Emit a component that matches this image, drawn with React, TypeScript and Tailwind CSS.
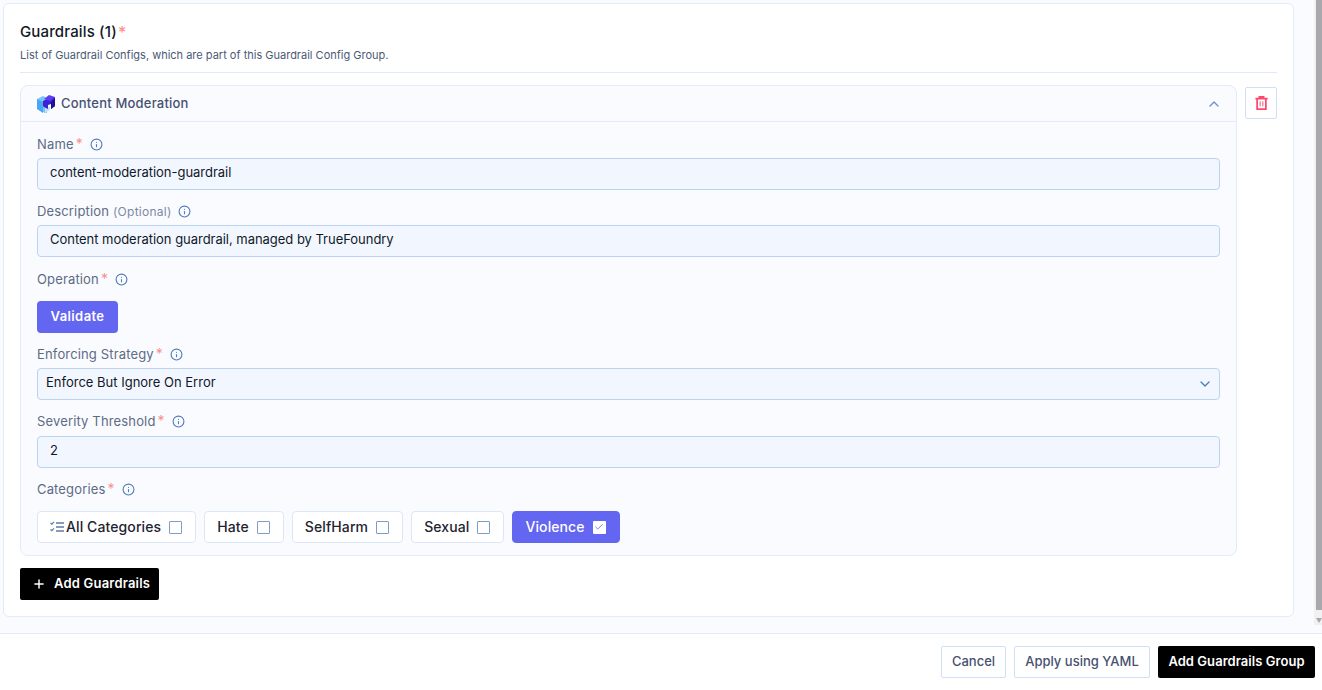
import React from "react";
import { Check, ChevronDown, ChevronUp, Info, Plus } from "lucide-react";

function Label({ text, optional, mb = "mb-1" }: { text: string; optional?: boolean; mb?: string }) {
  return (
    <div className={`h-5 flex items-center text-[13px] text-[#5d6b85] tracking-[0.15px] ${mb}`}>
      <span className="pt-[2px]">{text}</span>
      {optional ? (
        <span className="ml-1 pt-[2px] text-xs tracking-[0.25px] text-[#7b8aa5]">(Optional)</span>
      ) : (
        <span className="ml-[2px] text-[#fb8f8f] text-sm leading-none">*</span>
      )}
      <Info size={13} className={`text-[#4f7ab8] ${optional ? "ml-[6px]" : "ml-[7px]"}`} />
    </div>
  );
}

function TextBox({ value }: { value: string }) {
  return (
    <div className="h-8 flex items-center px-3 pb-[2px] border border-[#bcd3f0] rounded bg-[#f2f7ff] text-[13px] tracking-[-0.03px] text-[#111827]">
      {value}
    </div>
  );
}

function ChecksIcon() {
  return (
    <svg width="14" height="12" viewBox="0 0 14 12" fill="none" className="mr-[2px]">
      <path d="M6 2h8M6 6h8M6 10h8" stroke="#5f7ba8" strokeWidth="1.500" />
      <path d="M.5 2 1.800 3.200 4 .8M.5 8.500 1.800 9.700 4 7.300" stroke="#5f7ba8" strokeWidth="1.200" />
    </svg>
  );
}

function Chip({ label, checked, icon }: { label: string; checked?: boolean; icon?: boolean }) {
  return (
    <div
      className={`h-8 flex items-center pl-3 pr-[13px] rounded border font-medium text-sm tracking-[0.1px] ${
        checked
          ? "bg-[#6366f1] border-[#6366f1] text-white"
          : "bg-white border-[#dbe7f8] text-[#1f2430]"
      }`}
    >
      {icon && <ChecksIcon />}
      <span>{label}</span>
      {checked ? (
        <span className="ml-2 w-[13px] h-[13px] flex items-center justify-center bg-white rounded-[1px]">
          <Check size={10} strokeWidth={2} className="text-[#6366f1]" />
        </span>
      ) : (
        <span className="ml-2 w-[13px] h-[13px] border border-[#7f9cc7] rounded-[1px] bg-white" />
      )}
    </div>
  );
}

export default function App() {
  return (
    <div className="h-[690px] bg-[#f9fbff] overflow-hidden flex flex-col font-['Inter',sans-serif]">
      <div className="flex h-[634px] border-b border-[#e3eaf6]">
        <div className="flex-1 pl-[3px] pt-[3px]">
          {/* Guardrails card */}
          <section className="w-[1291px] h-[614px] bg-white border border-[#e2ebfa] rounded-md px-4 pt-[18px]">
            <h2 className="h-5 flex items-center text-[15px] tracking-[0.15px] font-medium text-[#111827]">
              Guardrails (1)
              <span className="ml-px text-[#fb8f8f] text-base leading-none">*</span>
            </h2>
            <p className="mt-1 text-[11px] leading-[18px] text-[#4b5a75]">
              List of Guardrail Configs, which are part of this Guardrail Config Group.
            </p>
            <div className="mt-2 border-t border-[#dfe9f8]" />

            <div className="mt-3 flex gap-2">
              <div className="w-[1217px] h-[471px] border border-[#e2ebfa] rounded-lg bg-[#fafbff]">
                <div className="h-9 flex items-center justify-between pl-4 pr-[14px] border-b border-[#e2ebfa]">
                  <div className="flex items-center gap-[6px] text-[13px] tracking-[0.2px] font-medium text-[#475170]">
                    <svg width="18" height="18" viewBox="0 0 18 18">
                      <path d="M0 4 6 1l4 2v15l-2 0-8-4z" fill="#7cc4f8" />
                      <path d="M0 4l6 3v11l-6-4z" fill="#4aa6f2" />
                      <path d="M8 13l5-1v3l-5 3z" fill="#bfe3fb" />
                      <path d="M6 6l6-3 6-1v9l-4 3V9l-3 1v4L7 12 6 11z" fill="#3b22d6" />
                      <path d="M7 4 12 0l6 2-5 4z" fill="#5a3ff0" />
                      <path d="M14 7l4-4v8l-4 3z" fill="#22108f" />
                    </svg>
                    Content Moderation
                  </div>
                  <ChevronUp size={16} className="text-[#6d93c7]" />
                </div>

                <div className="px-4 pt-3">
                  <Label text="Name" />
                  <TextBox value="content-moderation-guardrail" />

                  <div className="mt-[11px]">
                    <Label text="Description" optional />
                    <TextBox value="Content moderation guardrail, managed by TrueFoundry" />
                  </div>

                  <div className="mt-3">
                    <Label text="Operation" mb="mb-3" />
                    <button className="h-8 w-[81px] rounded bg-[#6366f1] text-white text-[13px] font-semibold tracking-[0.4px]">
                      Validate
                    </button>
                  </div>

                  <div className="mt-[11px]">
                    <Label text="Enforcing Strategy" />
                    <div className="h-8 flex items-center justify-between pl-2 pr-[6px] border border-[#bcd3f0] rounded bg-[#f2f7ff] text-[13px] text-[#111827]">
                      <span className="pb-[2px]">Enforce But Ignore On Error</span>
                      <ChevronDown size={16} className="text-[#4f7ab8]" />
                    </div>
                  </div>

                  <div className="mt-[11px]">
                    <Label text="Severity Threshold" mb="mb-[5px]" />
                    <TextBox value="2" />
                  </div>

                  <div className="mt-[11px]">
                    <Label text="Categories" mb="mb-3" />
                    <div className="flex gap-2">
                      <Chip label="All Categories" icon />
                      <Chip label="Hate" />
                      <Chip label="SelfHarm" />
                      <Chip label="Sexual" />
                      <Chip label="Violence" checked />
                    </div>
                  </div>
                </div>
              </div>

              <button className="mt-[2px] w-8 h-8 flex items-center justify-center bg-white border border-[#cfdff5] rounded-[2px]">
                <svg width="13" height="14" viewBox="0 0 14 16" fill="none" stroke="#fb4a6e">
                  <path d="M0 3h14M4.500 3V1h5v2" strokeWidth="1.800" />
                  <path d="M2 3v12h10V3" strokeWidth="2" />
                  <path d="M5.500 6v6M8.500 6v6" strokeWidth="1.500" stroke="#f8829c" />
                </svg>
              </button>
            </div>

            <button className="mt-3 h-8 w-[139px] flex items-center pl-3 gap-[8px] bg-black rounded-[2px] text-white text-[13px] tracking-[0.2px] font-semibold">
              <Plus size={14} strokeWidth={2.500} />
              Add Guardrails
            </button>
          </section>
        </div>

        {/* scrollbar */}
        <div className="w-2 h-[625px] pl-[2px] flex flex-col bg-[#f1f1f1]">
          <div className="h-[610px] bg-[#a8a8ae]" />
          <div className="mt-auto mb-[2px] h-[5px] bg-[#a8a8ae] [clip-path:polygon(0_0,100%_0,50%_100%)]" />
        </div>
      </div>

      {/* Footer */}
      <footer className="flex-1 bg-white flex justify-end items-start gap-2 pt-3 pr-[7px]">
        <button className="h-8 w-[65px] bg-white border border-[#cfdff5] rounded-[2px] text-[13px] font-medium text-[#475170]">
          Cancel
        </button>
        <button className="h-8 w-[136px] bg-white border border-[#cfdff5] rounded-[2px] text-[13px] font-medium text-[#475170]">
          Apply using YAML
        </button>
        <button className="h-8 w-[157px] bg-black rounded-[2px] text-[13px] tracking-[0.05px] font-semibold text-white">
          Add Guardrails Group
        </button>
      </footer>
    </div>
  );
}
